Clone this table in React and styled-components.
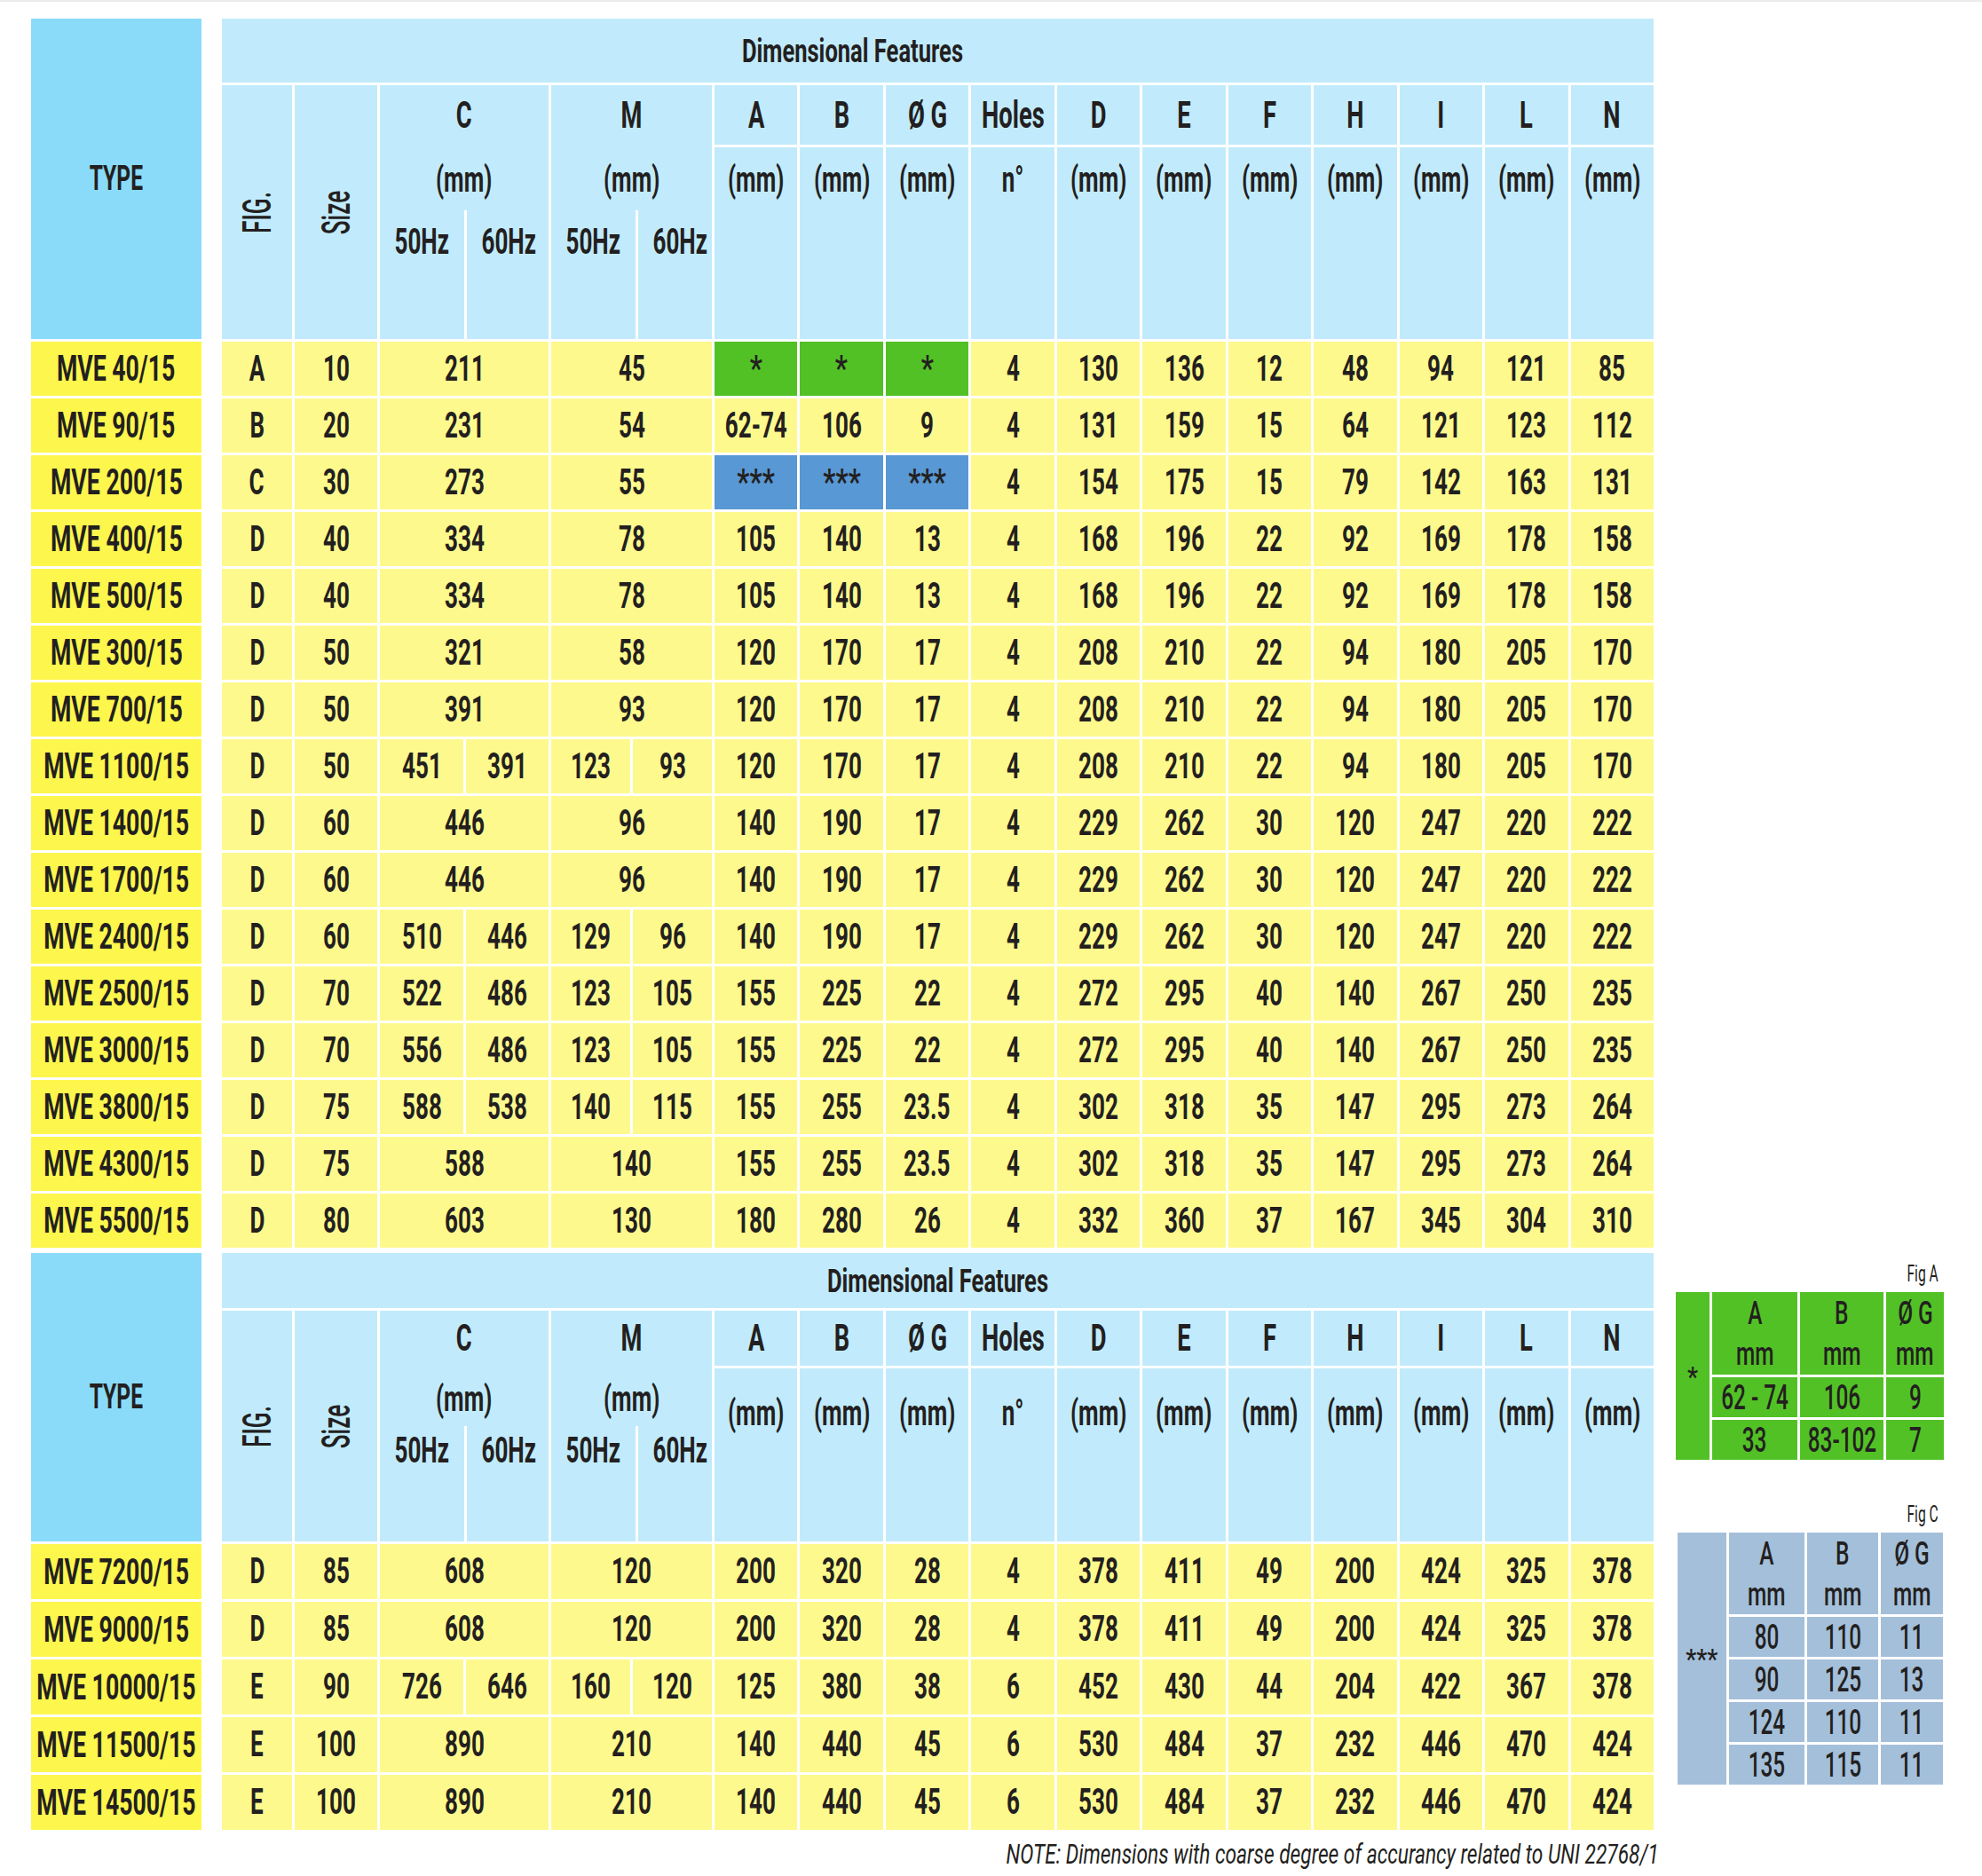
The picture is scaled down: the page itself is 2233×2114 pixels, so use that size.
import React from "react";
import styled, { createGlobalStyle } from "styled-components";

const GlobalStyle = createGlobalStyle`
  html, body {
    margin: 0;
    padding: 0;
    background: #fff;
  }
  body {
    font-family: Roboto, "Liberation Sans", sans-serif;
    color: #231f20;
  }
`;

const Page = styled.div`
  width: 2233px;
  min-height: 2114px;
  box-sizing: border-box;
  border-top: 2px solid #ebebeb;
  padding: 19px 0 0 35px;
`;

const Grid = styled.div`
  display: grid;
  width: 1828px;
  grid-template-columns: 212px 79px 93px 94px 93px 89px 89px repeat(11, 1fr);
  grid-template-rows: ${(p) => p.$rows};
  gap: 3px;
`;

const Cell = styled.div`
  display: flex;
  align-items: center;
  justify-content: center;
  min-width: 0;
  background: ${(p) => p.$bg || "#fef98d"};
  grid-column: ${(p) => (p.$span ? `span ${p.$span}` : "auto")};
  grid-row: ${(p) => (p.$rowSpan ? `span ${p.$rowSpan}` : "auto")};
`;

const TypeCell = styled(Cell)`
  margin-right: 20px;
  background: ${(p) => p.$bg || "#fdf64d"};
`;

const HeadCell = styled(Cell)`
  background: #c1ebfc;
  align-items: ${(p) => (p.$top ? "flex-start" : "center")};
  padding-top: ${(p) => p.$pad || 0}px;
  padding-right: ${(p) => p.$padRight || 0}px;
  box-sizing: border-box;
`;

const Txt = styled.span`
  display: inline-block;
  white-space: nowrap;
  font-size: ${(p) => p.$size || 40}px;
  font-weight: ${(p) => p.$weight || 700};
  font-style: ${(p) => (p.$italic ? "italic" : "normal")};
  line-height: 1;
  transform: scaleX(${(p) => p.$sx || 0.65});
  transform-origin: ${(p) => p.$origin || "center"} center;
`;

const Vert = styled(Txt)`
  transform: rotate(-90deg) scaleX(0.58);
`;

const SplitHead = styled(Cell)`
  background: #c1ebfc;
  flex-direction: column;
  align-items: stretch;
  justify-content: flex-start;
`;

const SplitLetter = styled.div`
  height: ${(p) => p.$h}px;
  display: flex;
  align-items: center;
  justify-content: center;
`;

const SplitMm = styled.div`
  height: ${(p) => p.$h}px;
  box-sizing: border-box;
  padding-top: ${(p) => p.$pad}px;
  display: flex;
  justify-content: center;
`;

const HzRow = styled.div`
  flex: 1;
  display: grid;
  grid-template-columns: 1fr 1fr;
`;

const Hz = styled.div`
  display: flex;
  justify-content: center;
  padding-top: ${(p) => p.$pad}px;
  border-left: ${(p) => (p.$divider ? "3px solid #fff" : "none")};
`;

const Bottom = styled.div`
  display: flex;
  align-items: flex-start;
  margin-top: 6px;
`;

const MainCol = styled.div`
  display: flex;
  flex-direction: column;
`;

const Note = styled.div`
  display: flex;
  justify-content: flex-end;
  margin: 11px -6px 0 0;
`;

const Side = styled.div`
  width: 302px;
  margin-left: 25px;
  padding-top: 10px;
  display: flex;
  flex-direction: column;
`;

const FigLabel = styled.div`
  display: flex;
  justify-content: flex-end;
  padding-right: 6px;
  height: 26px;
  margin: ${(p) => p.$mt || 0}px 0 8px;
  align-items: center;
`;

const Mini = styled.div`
  display: grid;
  grid-template-columns: ${(p) => p.$cols};
  grid-template-rows: ${(p) => p.$rows};
  gap: 3px;
  margin-left: ${(p) => p.$ml || 0}px;
`;

const MiniCell = styled.div`
  display: flex;
  align-items: center;
  justify-content: center;
  background: ${(p) => p.$bg};
  grid-row: ${(p) => (p.$full ? "1 / -1" : "auto")};
`;

const MiniHead = styled(MiniCell)`
  flex-direction: column;
  justify-content: flex-start;
  padding-top: 5px;
  gap: 9px;
`;

const GREEN = "#52c126";
const BLUE = "#5898d4";
const STEEL = "#a4bfda";

const letters = ["A", "B", "Ø G", "Holes", "D", "E", "F", "H", "I", "L", "N"];
const units = ["(mm)", "(mm)", "(mm)", "n°", "(mm)", "(mm)", "(mm)", "(mm)", "(mm)", "(mm)", "(mm)"];

const topRows = [
  { type: "MVE 40/15", fig: "A", size: 10, c: 211, m: 45, v: ["*", "*", "*", 4, 130, 136, 12, 48, 94, 121, 85], hl: GREEN },
  { type: "MVE 90/15", fig: "B", size: 20, c: 231, m: 54, v: ["62-74", 106, 9, 4, 131, 159, 15, 64, 121, 123, 112] },
  { type: "MVE 200/15", fig: "C", size: 30, c: 273, m: 55, v: ["***", "***", "***", 4, 154, 175, 15, 79, 142, 163, 131], hl: BLUE },
  { type: "MVE 400/15", fig: "D", size: 40, c: 334, m: 78, v: [105, 140, 13, 4, 168, 196, 22, 92, 169, 178, 158] },
  { type: "MVE 500/15", fig: "D", size: 40, c: 334, m: 78, v: [105, 140, 13, 4, 168, 196, 22, 92, 169, 178, 158] },
  { type: "MVE 300/15", fig: "D", size: 50, c: 321, m: 58, v: [120, 170, 17, 4, 208, 210, 22, 94, 180, 205, 170] },
  { type: "MVE 700/15", fig: "D", size: 50, c: 391, m: 93, v: [120, 170, 17, 4, 208, 210, 22, 94, 180, 205, 170] },
  { type: "MVE 1100/15", fig: "D", size: 50, c: [451, 391], m: [123, 93], v: [120, 170, 17, 4, 208, 210, 22, 94, 180, 205, 170] },
  { type: "MVE 1400/15", fig: "D", size: 60, c: 446, m: 96, v: [140, 190, 17, 4, 229, 262, 30, 120, 247, 220, 222] },
  { type: "MVE 1700/15", fig: "D", size: 60, c: 446, m: 96, v: [140, 190, 17, 4, 229, 262, 30, 120, 247, 220, 222] },
  { type: "MVE 2400/15", fig: "D", size: 60, c: [510, 446], m: [129, 96], v: [140, 190, 17, 4, 229, 262, 30, 120, 247, 220, 222] },
  { type: "MVE 2500/15", fig: "D", size: 70, c: [522, 486], m: [123, 105], v: [155, 225, 22, 4, 272, 295, 40, 140, 267, 250, 235] },
  { type: "MVE 3000/15", fig: "D", size: 70, c: [556, 486], m: [123, 105], v: [155, 225, 22, 4, 272, 295, 40, 140, 267, 250, 235] },
  { type: "MVE 3800/15", fig: "D", size: 75, c: [588, 538], m: [140, 115], v: [155, 255, "23.5", 4, 302, 318, 35, 147, 295, 273, 264] },
  { type: "MVE 4300/15", fig: "D", size: 75, c: 588, m: 140, v: [155, 255, "23.5", 4, 302, 318, 35, 147, 295, 273, 264] },
  { type: "MVE 5500/15", fig: "D", size: 80, c: 603, m: 130, v: [180, 280, 26, 4, 332, 360, 37, 167, 345, 304, 310] },
];

const bottomRows = [
  { type: "MVE 7200/15", fig: "D", size: 85, c: 608, m: 120, v: [200, 320, 28, 4, 378, 411, 49, 200, 424, 325, 378] },
  { type: "MVE 9000/15", fig: "D", size: 85, c: 608, m: 120, v: [200, 320, 28, 4, 378, 411, 49, 200, 424, 325, 378] },
  { type: "MVE 10000/15", fig: "E", size: 90, c: [726, 646], m: [160, 120], v: [125, 380, 38, 6, 452, 430, 44, 204, 422, 367, 378] },
  { type: "MVE 11500/15", fig: "E", size: 100, c: 890, m: 210, v: [140, 440, 45, 6, 530, 484, 37, 232, 446, 470, 424] },
  { type: "MVE 14500/15", fig: "E", size: 100, c: 890, m: 210, v: [140, 440, 45, 6, 530, 484, 37, 232, 446, 470, 424] },
];

const topLayout = {
  rows: "72px 67px 216px repeat(16, 61px)",
  letterH: 67,
  cMmH: 74,
  cMmPad: 20,
  hzPad: 16,
  mmPad: 17,
  dimPad: 192,
};

const bottomLayout = {
  rows: "62px 62px 195px repeat(5, 62px)",
  letterH: 62,
  cMmH: 68,
  cMmPad: 18,
  hzPad: 8,
  mmPad: 31,
  dimPad: 0,
};

function SplitHeader({ letter, l }) {
  return (
    <SplitHead $span={2} $rowSpan={2}>
      <SplitLetter $h={l.letterH}>
        <Txt $size={42}>{letter}</Txt>
      </SplitLetter>
      <SplitMm $h={l.cMmH} $pad={l.cMmPad}>
        <Txt>(mm)</Txt>
      </SplitMm>
      <HzRow>
        <Hz $pad={l.hzPad}>
          <Txt>50Hz</Txt>
        </Hz>
        <Hz $pad={l.hzPad} $divider>
          <Txt>60Hz</Txt>
        </Hz>
      </HzRow>
    </SplitHead>
  );
}

function Pair({ value }) {
  if (Array.isArray(value)) {
    return value.map((x, i) => (
      <Cell key={i}>
        <Txt>{x}</Txt>
      </Cell>
    ));
  }
  return (
    <Cell $span={2}>
      <Txt>{value}</Txt>
    </Cell>
  );
}

function Value({ x }) {
  const star = String(x).includes("*");
  return (
    <Txt $size={40} $sx={star ? 0.8 : 0.65} $weight={star ? 500 : 700}>
      {x}
    </Txt>
  );
}

function DimTable({ rows, l }) {
  return (
    <Grid $rows={l.rows}>
      <TypeCell $rowSpan={3} $bg="#8adbf9">
        <Txt $size={39} $sx={0.63}>TYPE</Txt>
      </TypeCell>
      <HeadCell $span={17} $padRight={l.dimPad}>
        <Txt $size={37} $sx={0.69}>Dimensional Features</Txt>
      </HeadCell>

      <HeadCell $rowSpan={2}>
        <Vert $size={45} $weight={500}>FIG.</Vert>
      </HeadCell>
      <HeadCell $rowSpan={2}>
        <Vert $size={45} $weight={500}>Size</Vert>
      </HeadCell>
      <SplitHeader letter="C" l={l} />
      <SplitHeader letter="M" l={l} />
      {letters.map((t) => (
        <HeadCell key={t}>
          <Txt $size={42}>{t}</Txt>
        </HeadCell>
      ))}
      {units.map((u, i) => (
        <HeadCell key={i} $top $pad={l.mmPad}>
          <Txt>{u}</Txt>
        </HeadCell>
      ))}

      {rows.map((r) => (
        <React.Fragment key={r.type}>
          <TypeCell>
            <Txt $size={41}>{r.type}</Txt>
          </TypeCell>
          <Cell>
            <Txt>{r.fig}</Txt>
          </Cell>
          <Cell>
            <Txt>{r.size}</Txt>
          </Cell>
          <Pair value={r.c} />
          <Pair value={r.m} />
          {r.v.map((x, i) => (
            <Cell key={i} $bg={r.hl && i < 3 ? r.hl : undefined}>
              <Value x={x} />
            </Cell>
          ))}
        </React.Fragment>
      ))}
    </Grid>
  );
}

function MiniTable({ star, bg, cols, rows, ml, data }) {
  return (
    <Mini $cols={cols} $rows={rows} $ml={ml}>
      <MiniCell $bg={bg} $full>
        <Txt $size={32} $weight={500} $sx={0.85}>{star}</Txt>
      </MiniCell>
      {["A", "B", "Ø G"].map((h) => (
        <MiniHead key={h} $bg={bg}>
          <Txt $size={37} $weight={500} $sx={0.66}>{h}</Txt>
          <Txt $size={37} $weight={500} $sx={0.66}>mm</Txt>
        </MiniHead>
      ))}
      {data.flat().map((x, i) => (
        <MiniCell key={i} $bg={bg}>
          <Txt $size={38} $weight={500} $sx={0.64}>{x}</Txt>
        </MiniCell>
      ))}
    </Mini>
  );
}

export default function App() {
  return (
    <Page>
      <GlobalStyle />
      <DimTable rows={topRows} l={topLayout} />
      <Bottom>
        <MainCol>
          <DimTable rows={bottomRows} l={bottomLayout} />
          <Note>
            <Txt $size={32} $weight={400} $italic $sx={0.71} $origin="right">
              NOTE: Dimensions with coarse degree of accurancy related to UNI 22768/1
            </Txt>
          </Note>
        </MainCol>
        <Side>
          <FigLabel>
            <Txt $size={26} $weight={400} $sx={0.6} $origin="right">Fig A</Txt>
          </FigLabel>
          <MiniTable
            star="*"
            bg={GREEN}
            cols="38px 96px 94px 65px"
            rows="93px 45px 45px"
            data={[["62 - 74", 106, 9], [33, "83-102", 7]]}
          />
          <FigLabel $mt={48}>
            <Txt $size={26} $weight={400} $sx={0.6} $origin="right">Fig C</Txt>
          </FigLabel>
          <MiniTable
            star="***"
            bg={STEEL}
            cols="55px 85px 80px 70px"
            rows="92px 45px 45px 45px 45px"
            ml={2}
            data={[[80, 110, 11], [90, 125, 13], [124, 110, 11], [135, 115, 11]]}
          />
        </Side>
      </Bottom>
    </Page>
  );
}
